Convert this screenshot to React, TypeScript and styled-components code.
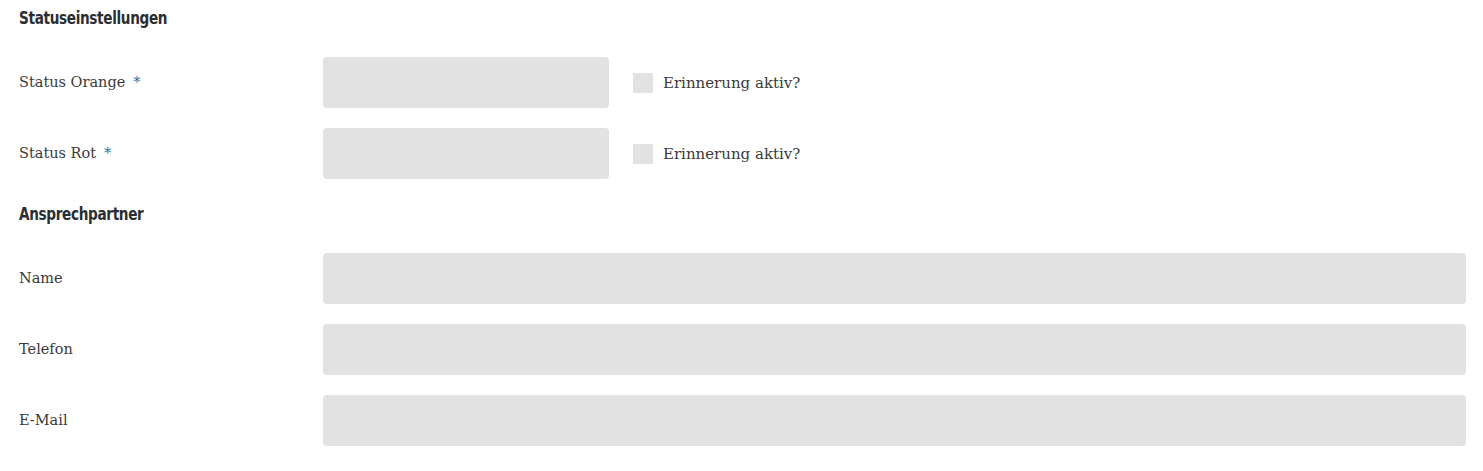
import React from "react";
import styled, { createGlobalStyle } from "styled-components";

const Global = createGlobalStyle`
  html, body { margin: 0; padding: 0; background: #fff; }
  body { font-family: "DejaVu Serif", "Liberation Serif", serif; color: #3a3a3a; }
`;

const Form = styled.div`
  padding: 3px 17px 0 19px;
`;

const Heading = styled.h2`
  margin: 0 0 24px;
  height: 30px;
  line-height: 30px;
  font-family: "DejaVu Sans", "Liberation Sans", sans-serif;
  font-stretch: condensed;
  font-weight: 700;
  font-size: 18px;
  color: #2a2e33;
  letter-spacing: -0.4px;
  transform: scaleX(0.84);
  transform-origin: left center;
`;

const Row = styled.div<{ $narrow?: boolean }>`
  display: grid;
  grid-template-columns: 304px ${(p) => (p.$narrow ? "286px auto" : "1fr")};
  align-items: center;
  height: 51px;
  margin-bottom: 20px;
`;

const Label = styled.label`
  font-size: 14.5px;
  color: #3a3a3a;
  margin-top: -2px;
`;

const Required = styled.span`
  color: #1f6ea6;
  margin-left: 8px;
`;

const Input = styled.input`
  box-sizing: border-box;
  height: 51px;
  width: 100%;
  border: none;
  border-radius: 4px;
  background: #e2e2e2;
  outline: none;
`;

const Check = styled.label`
  display: flex;
  align-items: center;
  gap: 10px;
  margin-left: 24px;
  font-size: 15px;
  color: #3a3a3a;
`;

const Box = styled.span`
  display: inline-block;
  width: 20px;
  height: 20px;
  background: #e2e2e2;
`;

export default function App() {
  return (
    <>
      <Global />
      <Form>
        <Heading>Statuseinstellungen</Heading>
        <Row $narrow>
          <Label>
            Status Orange<Required>*</Required>
          </Label>
          <Input />
          <Check>
            <Box />
            Erinnerung aktiv?
          </Check>
        </Row>
        <Row $narrow>
          <Label>
            Status Rot<Required>*</Required>
          </Label>
          <Input />
          <Check>
            <Box />
            Erinnerung aktiv?
          </Check>
        </Row>
        <Heading>Ansprechpartner</Heading>
        <Row>
          <Label>Name</Label>
          <Input />
        </Row>
        <Row>
          <Label>Telefon</Label>
          <Input />
        </Row>
        <Row>
          <Label>E-Mail</Label>
          <Input />
        </Row>
      </Form>
    </>
  );
}
